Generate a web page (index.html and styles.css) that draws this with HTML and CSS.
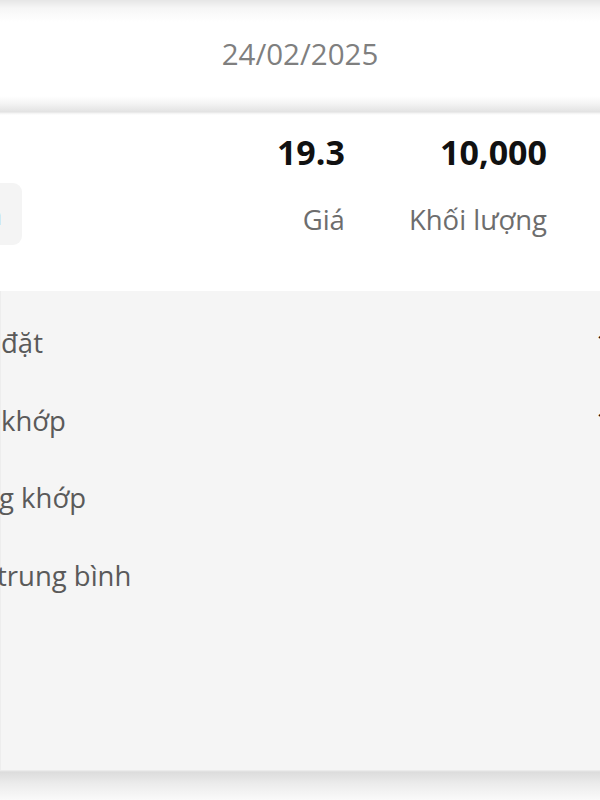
FILE: index.html
```html
<!DOCTYPE html>
<html lang="vi">
<head>
<meta charset="utf-8">
<title>Chi tiết lệnh</title>
<link rel="stylesheet" href="styles.css">
</head>
<body>

<div id="date-bar"><span class="date">24/02/2025</span></div>

<div id="order-card">
  <div class="tab-stub"><span>n</span></div>
  <div class="col">
    <div class="value">19.3</div>
    <div class="label">Giá</div>
  </div>
  <div class="col">
    <div class="value">10,000</div>
    <div class="label">Khối lượng</div>
  </div>
</div>

<div id="detail">
  <div class="row"><span class="row-label">đặt</span><span class="row-value">1</span></div>
  <div class="row"><span class="row-label">khớp</span><span class="row-value">1</span></div>
  <div class="row"><span class="row-label shift-g">g khớp</span></div>
  <div class="row"><span class="row-label shift-t">trung bình</span></div>
</div>

<div id="footer-shadow"></div>

</body>
</html>
```

FILE: styles.css
```css
html, body {
  margin:0;
  padding:0;
}

body {
  width:600px;
  height:800px;
  overflow:hidden;
  background:#fafafa;
  font-family:"Open Sans", "Noto Sans", sans-serif;
}

#date-bar {
  height:115px;
  display:flex;
  justify-content:center;
  padding-top:34px;
  box-sizing:border-box;
  background:linear-gradient(to bottom,
    #e6e6e6 0px, #f6f6f6 8px, #ffffff 22px,
    #ffffff 96px, #f3f3f3 104px, #e2e2e2 112px, #f2f2f2 113px, #ffffff 115px);
}

#date-bar .date {
  font-size:29.5px;
  line-height:40px;
  color:#7f7f7f;
}

#order-card {
  height:176px;
  box-sizing:border-box;
  background:#ffffff;
  padding:14px 53px 0 0;
  display:grid;
  grid-template-columns:1fr auto auto;
  column-gap:64px;
  align-items:start;
}

.tab-stub {
  width:60px;
  height:62px;
  margin:54px 0 0 -38px;
  background:#f4f4f4;
  border-radius:9px;
  display:flex;
  justify-content:flex-end;
  align-items:center;
  padding-right:20px;
  box-sizing:border-box;
  font-size:27px;
  color:#555555;
}

.col {
  text-align:right;
}

.col .value {
  font-size:34px;
  font-weight:bold;
  line-height:46px;
  color:#111111;
}

.col .label {
  margin-top:25px;
  font-size:27.5px;
  line-height:40px;
  color:#6d6d6d;
}

#detail {
  height:479px;
  box-sizing:border-box;
  background:#f5f5f5;
  border-left:1px solid #ededed;
  padding-top:13px;
}

.row {
  height:77.5px;
  display:flex;
  justify-content:space-between;
  align-items:center;
}

.row-label {
  font-size:27.5px;
  color:#5a5a5a;
}

.row-label.shift-g {
  margin-left:-2px;
}

.row-label.shift-t {
  margin-left:-4px;
}

.row-value {
  width:30px;
  margin-right:-26px;
  font-size:27.5px;
  color:#111111;
}

#footer-shadow {
  height:30px;
  background:linear-gradient(to bottom, #f0f0f0 0px, #dcdcdc 2px, #ececec 14px, #fafafa 30px);
}
```
